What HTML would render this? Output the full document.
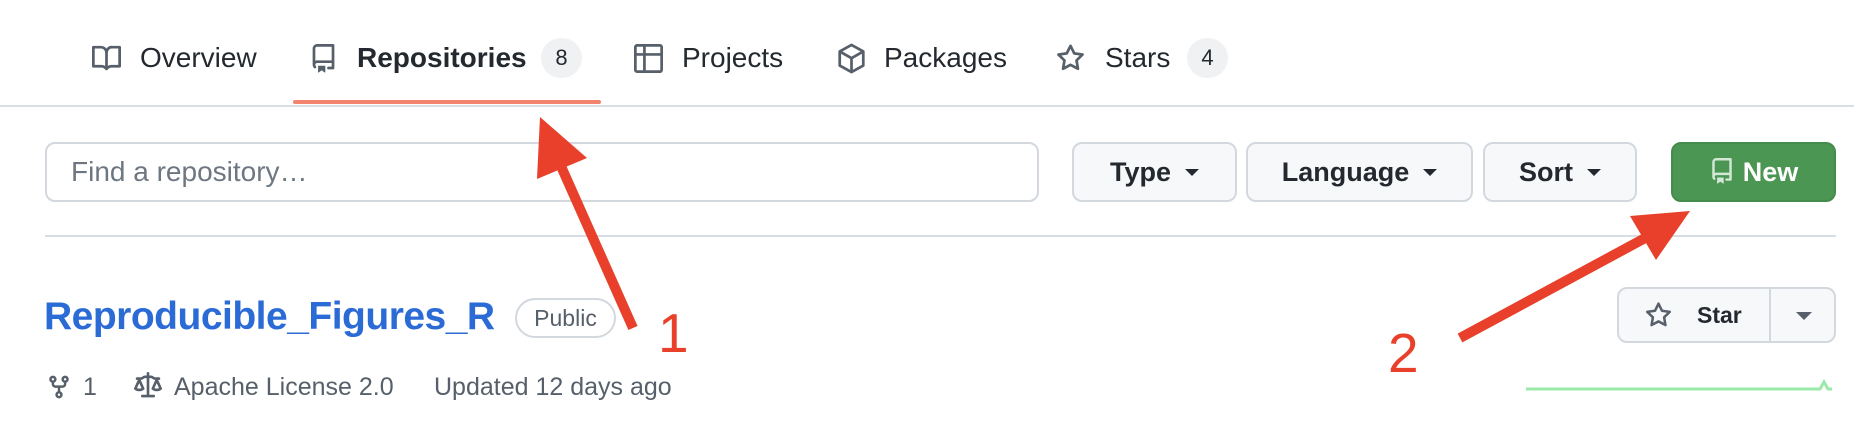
<!DOCTYPE html>
<html><head><meta charset="utf-8"><style>
*{margin:0;padding:0;box-sizing:border-box}
body{width:1854px;height:432px;background:#fff;position:relative;overflow:hidden;font-family:"Liberation Sans",sans-serif;color:#24292f}
.a{position:absolute;white-space:nowrap}
.t{font-size:28px;line-height:32px;top:42px;color:#24292f}
.cnt{position:absolute;top:38px;width:41px;height:40px;border-radius:20px;background:#eff1f3;font-size:22px;line-height:40px;text-align:center;color:#24292f}
.btn{position:absolute;top:142px;height:60px;border:2px solid #d3d8de;border-radius:10px;background:#f6f8fa;font-size:27px;line-height:56px;text-align:center;font-weight:bold;color:#24292f}
.car{display:inline-block;width:0;height:0;border-left:7px solid transparent;border-right:7px solid transparent;border-top:7px solid #24292f;vertical-align:middle;margin-left:14px;margin-top:-3px}
svg.i{position:absolute}
</style></head><body>
<!-- nav -->
<svg class="i" style="left:92px;top:44px" width="29" height="29" viewBox="0 0 16 16" fill="#57606a"><path d="M0 1.75A.75.75 0 01.75 1h4.253c1.227 0 2.317.59 3 1.501A3.744 3.744 0 0111.006 1h4.245a.75.75 0 01.75.75v10.5a.75.75 0 01-.75.75h-4.507a2.25 2.25 0 00-1.591.659l-.622.621a.75.75 0 01-1.06 0l-.622-.621A2.25 2.25 0 005.258 13H.75a.75.75 0 01-.75-.75zm7.251 10.324l.004-5.073-.002-2.253A2.25 2.25 0 005.003 2.5H1.5v9h3.757a3.75 3.75 0 011.994.574zM8.755 4.75l-.004 7.322a3.752 3.752 0 011.992-.572H14.5v-9h-3.495a2.25 2.25 0 00-2.25 2.25z"/></svg>
<div class="a t" style="left:140px">Overview</div>
<svg class="i" style="left:309px;top:44px" width="29" height="29" viewBox="0 0 16 16" fill="#57606a"><path d="M2 2.5A2.5 2.5 0 014.5 0h8.75a.75.75 0 01.75.75v12.5a.75.75 0 01-.75.75h-2.5a.75.75 0 010-1.5h1.75v-2h-8a1 1 0 00-.714 1.7.75.75 0 11-1.072 1.05A2.495 2.495 0 012 11.5zm10.5-1h-8a1 1 0 00-1 1v6.708A2.486 2.486 0 014.5 9h8zM5 12.25a.25.25 0 01.25-.25h3.5a.25.25 0 01.25.25v3.25a.25.25 0 01-.4.2l-1.45-1.087a.249.249 0 00-.3 0L5.4 15.7a.25.25 0 01-.4-.2z"/></svg>
<div class="a t" style="left:357px;font-weight:bold">Repositories</div>
<div class="cnt" style="left:541px">8</div>
<div class="a" style="left:293px;top:100px;width:308px;height:4px;border-radius:2px;background:#f2846e"></div>
<svg class="i" style="left:634px;top:44px" width="29" height="29" viewBox="0 0 16 16" fill="#57606a"><path d="M0 1.75C0 .784.784 0 1.750 0h12.5C15.216 0 16 .784 16 1.75v12.5A1.75 1.75 0 0114.25 16H1.75A1.75 1.75 0 010 14.25zM6.5 6.5v8h7.75a.25.25 0 00.25-.25V6.5zm8-1.5V1.75a.25.25 0 00-.25-.25H6.5V5zM5 6.5H1.5v7.75c0 .138.112.25.25.25H5zM5 5V1.5H1.75a.25.25 0 00-.25.25V5z"/></svg>
<div class="a t" style="left:682px">Projects</div>
<svg class="i" style="left:837px;top:43px" width="29" height="31" viewBox="0 0 16 17" fill="none" stroke="#57606a" stroke-width="1.5" stroke-linejoin="round"><path d="M8 1L14.5 4.6V12.4L8 16L1.5 12.4V4.6Z"/><path d="M1.5 4.6L8 8.3L14.5 4.6M8 8.3V16"/></svg>
<div class="a t" style="left:884px">Packages</div>
<svg class="i" style="left:1056px;top:44px" width="29" height="29" viewBox="0 0 16 16" fill="#57606a"><path d="M8 .25a.75.75 0 01.673.418l1.882 3.815 4.21.612a.75.75 0 01.416 1.279l-3.046 2.970.719 4.192a.751.751 0 01-1.088.791L8 12.347l-3.766 1.98a.75.75 0 01-1.088-.79l.72-4.194L.818 6.374a.75.75 0 01.416-1.28l4.210-.611L7.327.668A.75.75 0 018 .25zm0 2.445L6.615 5.5a.75.75 0 01-.564.41l-3.097.45 2.24 2.184a.75.75 0 01.216.664l-.528 3.084 2.769-1.456a.75.75 0 01.698 0l2.77 1.456-.53-3.084a.75.75 0 01.216-.664l2.24-2.183-3.096-.45a.75.75 0 01-.564-.41z"/></svg>
<div class="a t" style="left:1105px">Stars</div>
<div class="cnt" style="left:1187px">4</div>
<div class="a" style="left:0;top:105px;width:1854px;height:2px;background:#d8dee4"></div>
<!-- filter row -->
<div class="a" style="left:45px;top:142px;width:994px;height:60px;border:2px solid #d3d8de;border-radius:10px;font-size:28px;line-height:56px;padding-left:24px;color:#6e7781">Find a repository…</div>
<div class="btn" style="left:1072px;width:165px">Type<span class="car"></span></div>
<div class="btn" style="left:1246px;width:227px">Language<span class="car"></span></div>
<div class="btn" style="left:1483px;width:154px">Sort<span class="car"></span></div>
<div class="btn" style="left:1671px;width:165px;background:#4c9654;border-color:#458b4c;color:#fff"><svg style="vertical-align:middle;margin-top:-6px;margin-right:8px" width="26" height="28" viewBox="0 0 16 16" fill="#d4e8d6"><path d="M2 2.5A2.5 2.5 0 014.5 0h8.75a.75.75 0 01.75.75v12.5a.75.75 0 01-.75.75h-2.5a.75.75 0 010-1.5h1.75v-2h-8a1 1 0 00-.714 1.7.75.75 0 11-1.072 1.05A2.495 2.495 0 012 11.5zm10.5-1h-8a1 1 0 00-1 1v6.708A2.486 2.486 0 014.5 9h8zM5 12.25a.25.25 0 01.25-.25h3.5a.25.25 0 01.25.25v3.25a.25.25 0 01-.4.2l-1.45-1.087a.249.249 0 00-.3 0L5.4 15.7a.25.25 0 01-.4-.2z"/></svg>New</div>
<div class="a" style="left:45px;top:235px;width:1791px;height:2px;background:#d8dee4"></div>
<!-- repo -->
<div class="a" style="left:44px;top:294px;font-size:39px;line-height:46px;font-weight:bold;color:#2b6bd6;letter-spacing:-0.5px">Reproducible_Figures_R</div>
<div class="a" style="left:515px;top:298px;width:101px;height:40px;border:2px solid #d3d8de;border-radius:20px;font-size:23px;line-height:36px;text-align:center;color:#57606a">Public</div>
<svg class="i" style="left:46px;top:373px" width="26" height="28" viewBox="0 0 16 16" fill="#57606a"><path d="M5 5.372v.878c0 .414.336.75.75.75h4.5a.75.75 0 00.75-.75v-.878a2.25 2.25 0 111.5 0v.878a2.25 2.25 0 01-2.25 2.25h-1.5v2.128a2.251 2.251 0 11-1.5 0V8.5h-1.5A2.25 2.25 0 013.5 6.250v-.878a2.25 2.25 0 111.5 0zM5 3.25a.75.75 0 10-1.5 0 .75.75 0 001.5 0zm6.75.75a.75.75 0 100-1.5.75.75 0 000 1.5zm-3 8.75a.75.75 0 10-1.5 0 .75.75 0 001.5 0z"/></svg>
<div class="a" style="left:83px;top:373px;font-size:25px;line-height:28px;color:#57606a">1</div>
<svg class="i" style="left:133px;top:372px" width="30" height="28" viewBox="0 0 16 16" fill="#57606a"><path d="M8.75.75V2h.985c.304 0 .603.08.867.231l1.29.736c.038.022.08.033.124.033h2.234a.75.75 0 010 1.5h-.427l2.111 4.692a.75.75 0 01-.154.838l-.53-.53.529.531-.001.002-.002.002-.006.006-.006.005-.01.01-.045.04c-.21.176-.441.327-.686.45C14.556 10.78 13.88 11 13 11a4.498 4.498 0 01-2.023-.454 3.544 3.544 0 01-.686-.45l-.045-.04-.016-.015-.006-.006-.004-.004v-.001a.75.75 0 01-.154-.838L12.178 4.5h-.162c-.305 0-.604-.079-.868-.231l-1.29-.736a.245.245 0 00-.124-.033H8.75V13h2.5a.75.75 0 010 1.5h-6.5a.75.75 0 010-1.5h2.5V3.5h-.984a.245.245 0 00-.124.033l-1.289.737c-.265.15-.564.23-.869.23h-.162l2.112 4.692a.75.75 0 01-.154.838l-.53-.53.529.531-.001.002-.002.002-.006.006-.016.015-.045.04c-.21.176-.441.327-.686.45C4.556 10.78 3.88 11 3 11a4.498 4.498 0 01-2.023-.454 3.544 3.544 0 01-.686-.45l-.045-.04-.016-.015-.006-.006-.004-.004v-.001a.75.75 0 01-.154-.838L2.178 4.5H1.750a.75.75 0 010-1.5h2.234a.249.249 0 00.125-.033l1.288-.737c.265-.15.564-.23.869-.23h.984V.75a.75.75 0 011.5 0zm2.945 8.477c.285.135.718.273 1.305.273s1.02-.138 1.305-.273L13 6.327zm-10 0c.285.135.718.273 1.305.273s1.02-.138 1.305-.273L3 6.327z"/></svg>
<div class="a" style="left:174px;top:373px;font-size:25px;line-height:28px;color:#57606a">Apache License 2.0</div>
<div class="a" style="left:434px;top:373px;font-size:25px;line-height:28px;color:#57606a">Updated 12 days ago</div>
<!-- star button -->
<div class="a" style="left:1617px;top:287px;width:219px;height:56px;border:2px solid #d3d8de;border-radius:10px;background:#f6f8fa"></div>
<div class="a" style="left:1769px;top:289px;width:2px;height:52px;background:#d3d8de"></div>
<svg class="i" style="left:1645px;top:302px" width="27" height="27" viewBox="0 0 16 16" fill="#57606a"><path d="M8 .25a.75.75 0 01.673.418l1.882 3.815 4.21.612a.75.75 0 01.416 1.279l-3.046 2.97.719 4.192a.751.751 0 01-1.088.791L8 12.347l-3.766 1.98a.75.75 0 01-1.088-.79l.72-4.194L.818 6.374a.75.75 0 01.416-1.28l4.21-.611L7.327.668A.75.75 0 018 .25zm0 2.445L6.615 5.5a.75.75 0 01-.564.41l-3.097.45 2.24 2.184a.75.75 0 01.216.664l-.528 3.084 2.769-1.456a.75.75 0 01.698 0l2.77 1.456-.53-3.084a.75.75 0 01.216-.664l2.24-2.183-3.096-.45a.75.75 0 01-.564-.41z"/></svg>
<div class="a" style="left:1697px;top:301px;font-size:23px;line-height:28px;font-weight:bold;color:#24292f">Star</div>
<div class="a" style="left:1796px;top:312px;width:0;height:0;border-left:8px solid transparent;border-right:8px solid transparent;border-top:8px solid #57606a"></div>
<!-- sparkline -->
<svg class="i" style="left:1520px;top:375px" width="320" height="20"><polyline points="6,14 300,14 304,7 308,14 312,14" fill="none" stroke="#9be9a8" stroke-width="3"/></svg>
<!-- annotations -->
<svg class="i" style="left:0;top:0" width="1854" height="432">
<line x1="633" y1="328" x2="556" y2="155" stroke="#e8402a" stroke-width="10"/>
<polygon points="540,117 537,179 587,158" fill="#e8402a"/>
<line x1="1460" y1="338" x2="1660" y2="230" stroke="#e8402a" stroke-width="10"/>
<polygon points="1690,211 1630,216 1656,260" fill="#e8402a"/>
<text x="658" y="352" font-family="Liberation Sans" font-size="55" fill="#e8402a">1</text>
<text x="1388" y="372" font-family="Liberation Sans" font-size="55" fill="#e8402a">2</text>
</svg>
</body></html>
